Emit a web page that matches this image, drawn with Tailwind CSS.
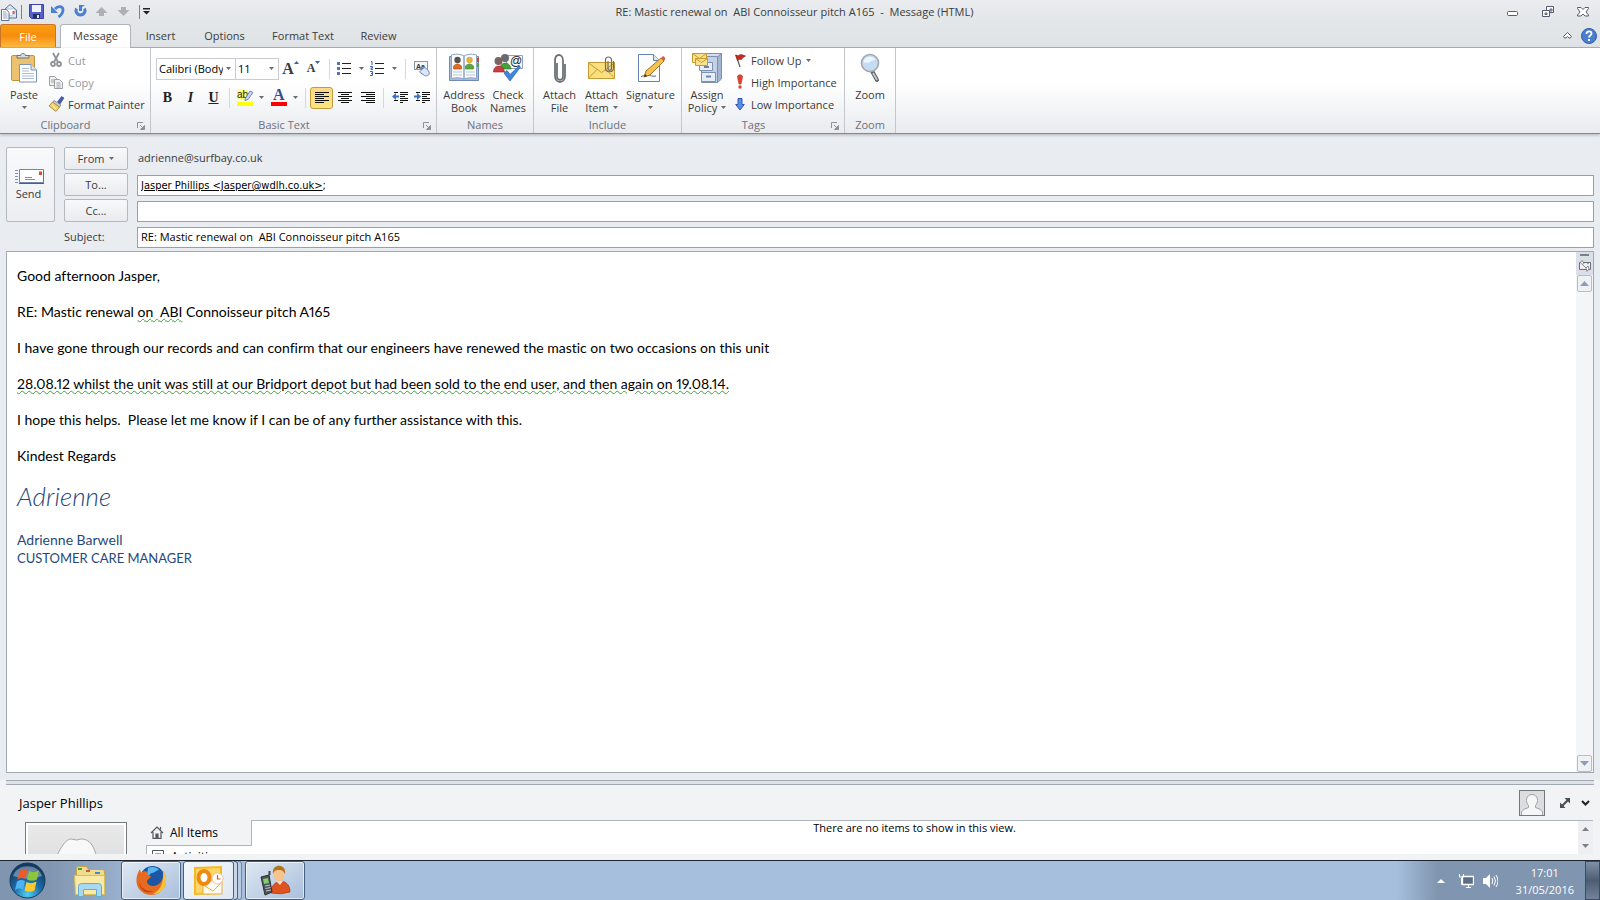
<!DOCTYPE html>
<html lang="en">
<head>
  <meta charset="UTF-8" />
  <meta name="viewport" content="width=device-width, initial-scale=1" />
  <title>RE: Mastic renewal on ABI Connoisseur pitch A165 - Message (HTML)</title>
  <script src="https://cdn.jsdelivr.net/npm/@tailwindcss/browser@4"></script>
</head>
<body class="flex h-screen flex-col overflow-hidden bg-[#e9ecf1] font-['Open_Sans','Noto_Sans',sans-serif] text-[11px] leading-[13px] text-[#3b3b3b]">

  <!-- Shared shapes -->
  <svg class="hidden">
    <symbol id="down" viewBox="0 0 5 3"><path d="M0 0h5L2.500 3z" fill="#6b6b6b"/></symbol>
    <symbol id="launcher" viewBox="0 0 8 8"><path d="M.5 6V.5H6" fill="none" stroke="#8b909a"/><path d="M3 3l3 3M7.500 3.500v4h-4z" fill="#8b909a" stroke="#8b909a"/></symbol>
  </svg>

  <!-- Title bar -->
  <header class="flex h-6 shrink-0 items-center bg-gradient-to-b from-[#eaecef] to-[#e3e6e9] pb-px">
    <div class="flex flex-1 items-center">
      <svg class="h-[18px] w-[18px]" viewBox="0 0 18 18"><path d="M4 7l6-5.500L16.500 7v8H4z" fill="#dfe9f6" stroke="#5c7394"/><path d="M6 6h9v4l-4 3-5-3z" fill="#fff" stroke="#8ea2bd" stroke-width=".6"/><path d="M12.500 8h2v3h-2z" fill="#e2593c"/><path d="M1.500 6.500h5l2.500 3v8H1.500z" fill="#fff" stroke="#5c7394"/><path d="M3 9h3M3 11h4.500M3 13h4.500M3 15h4.500" stroke="#8ea2bd"/></svg>
      <span class="mx-[3px] h-[14px] w-px bg-[#7d8187]"></span>
      <button class="ml-1 w-[22px]" aria-label="Save"><svg class="h-[15px] w-[15px]" viewBox="0 0 15 15"><path d="M.5.5h14v14h-12l-2-2z" fill="#5560cc" stroke="#3b43a3"/><path d="M3 1h9v7H3z" fill="#eef2fb"/><path d="M4 10h7v4.500H4z" fill="#26305f"/><path d="M8 11h2v3H8z" fill="#dfe4f4"/></svg></button>
      <button class="w-[22px]" aria-label="Undo"><svg class="h-[15px] w-[15px]" viewBox="0 0 15 15"><path d="M4 5c3-3.500 8-3 8 1 0 3-1.500 5-4.500 7" fill="none" stroke="#4a7fd6" stroke-width="2.800"/><path d="M0 2v7h7z" fill="#4a7fd6"/></svg></button>
      <button class="w-[22px]" aria-label="Redo"><svg class="h-[15px] w-[15px]" viewBox="0 0 15 15"><path d="M3.500 4.500a4.500 4.500 0 1 0 8 0" fill="none" stroke="#4a7fd6" stroke-width="3"/><path d="M6 1h6L9 3v4H6z" fill="#4a7fd6"/></svg></button>
      <button class="w-[22px]" aria-label="Previous item"><svg class="h-[13px] w-[13px]" viewBox="0 0 13 13"><path d="M6.500 2L12.500 8H9v3H4V8H.5z" fill="#adb0b4"/></svg></button>
      <button class="w-[22px]" aria-label="Next item"><svg class="h-[13px] w-[13px]" viewBox="0 0 13 13"><path d="M6.500 11L12.500 5H9V2H4v3H.5z" fill="#adb0b4"/></svg></button>
      <span class="h-[14px] w-px bg-[#7d8187]"></span>
      <button class="ml-[3px]" aria-label="Customise toolbar"><svg class="h-[7px] w-[8px]" viewBox="0 0 8 7"><path d="M0 0h7v1.500H0zM0 3h7L3.500 6.500z" fill="#222"/></svg></button>
    </div>
    <h1 class="text-center whitespace-pre">RE: Mastic renewal on  ABI Connoisseur pitch A165  -  Message (HTML)</h1>
    <div class="flex flex-1 items-center justify-end gap-[23px] pr-[11px]">
      <button aria-label="Minimize"><svg class="h-[12px] w-[12px]" viewBox="0 0 12 12"><rect x=".5" y="5.500" width="10" height="4" rx="1" fill="#fff" stroke="#565b73"/></svg></button>
      <button aria-label="Restore"><svg class="h-[12px] w-[12px]" viewBox="0 0 12 12"><path d="M4.500.5h7v6h-7z" fill="#fff" stroke="#565b73"/><path d="M8 3h2v2H8z" fill="none" stroke="#565b73"/><path d="M.5 4.500h7v6h-7z" fill="#fff" stroke="#565b73"/><path d="M3 7h2v1.500H3z" fill="none" stroke="#565b73"/></svg></button>
      <button aria-label="Close"><svg class="h-[12px] w-[12px]" viewBox="0 0 12 12"><path d="M.5 1.500h3.500l2 2 2-2h3.500v1L9 6l2.500 3v1H8L6 8l-2 2H.5V9L3 6 .5 2.500z" fill="#fff" stroke="#565b73"/></svg></button>
    </div>
  </header>

  <!-- Tabs -->
  <nav class="flex h-6 shrink-0 items-end border-b border-[#b0b4ba] bg-gradient-to-b from-[#e3e6e9] to-[#dfe3e6]">
    <button class="h-[23px] w-14 rounded-t-[3px] border border-b-0 border-[#c9742a] bg-gradient-to-b from-[#f9a012] via-[#f78c0c] to-[#fdbb3c] text-white">File</button>
    <button class="-mb-px ml-1 h-6 w-[71px] rounded-t-[3px] border border-b-0 border-[#b0b4ba] bg-white pb-[2px]">Message</button>
    <button class="h-[23px] w-[59px]">Insert</button>
    <button class="h-[23px] w-[69px]">Options</button>
    <button class="h-[23px] w-[88px]">Format Text</button>
    <button class="h-[23px] w-[63px]">Review</button>
    <div class="ml-auto flex h-[23px] items-center gap-[9px] pr-[3px]">
      <button aria-label="Minimize the ribbon"><svg class="h-[7px] w-[9px]" viewBox="0 0 9 7"><path d="M.5 4.500l4-4 4 4-1 1.500H6L4.500 4.500 3 6H1.500z" fill="#fff" stroke="#565b73"/></svg></button>
      <button aria-label="Help"><svg class="h-4 w-4" viewBox="0 0 16 16"><circle cx="8" cy="8" r="7.500" fill="#4a7fd0" stroke="#2f5ca8"/><path d="M5.500 6c0-3.500 5-3.500 5-.5 0 2-2.500 2-2.500 4" fill="none" stroke="#fff" stroke-width="1.800"/><path d="M7 11h2v2H7z" fill="#fff"/></svg></button>
    </div>
  </nav>

  <!-- Ribbon -->
  <section class="flex h-[86px] shrink-0 border-b border-[#85898f] bg-gradient-to-b from-white from-40% to-[#e9ebef] shadow-[0_1px_3px_rgba(0,0,0,0.25)]">

    <div class="flex w-[151px] flex-col border-r border-[#c3c7cc]">
      <div class="flex flex-1">
        <button class="flex w-12 flex-col items-center pt-[5px]">
          <svg class="h-[30px] w-[28px]" viewBox="0 0 28 30"><rect x="1.500" y="2.500" width="23" height="25" rx="1.500" fill="#ecc271" stroke="#c5933f"/><path d="M7 5V2.500h3.500C11-.2 15-.2 15.500 2.500H19V5z" fill="#d7dade" stroke="#6d7277"/><path d="M9.500 11.500H21l5.500 5.500v12H9.500z" fill="#fff" stroke="#7a93b8"/><path d="M21 11.500V17h5.500" fill="#dce6f3" stroke="#7a93b8"/><path d="M12 15.500h7M12 18h7M12 20.500h12M12 23h12M12 25.500h12" stroke="#a9bbd5"/></svg>
          <span class="mt-[5px]">Paste</span>
          <svg class="mt-[5px] h-[3px] w-[5px]"><use href="#down"/></svg>
        </button>
        <div class="flex flex-col pt-px">
          <button disabled class="flex h-[22px] items-center gap-1 text-[#96999e]"><svg class="h-4 w-4" viewBox="0 0 16 16" fill="none" stroke="#8f9297" stroke-width="1.800"><path d="M5 1l5 9M11 1l-5 9"/><circle cx="5" cy="12" r="2"/><circle cx="11" cy="12" r="2"/></svg>Cut</button>
          <button disabled class="flex h-[22px] items-center gap-1 text-[#96999e]"><svg class="h-4 w-4" viewBox="0 0 16 16" fill="#f1f1f2" stroke="#9c9fa4"><path d="M1.500 2.500h5l3 3v6h-8z"/><path d="M3 6h3M3 8h3"/><path d="M6.500 5.500h5l3 3v6h-8z"/><path d="M8.500 9h4M8.500 11h4M8.500 13h4"/></svg>Copy</button>
          <button class="flex h-[22px] items-center gap-1"><svg class="h-4 w-4" viewBox="0 0 16 16"><path d="M9.500 6l4-5.500 2.500 1.500-4 6z" fill="#4c56b5" stroke="#343d8c" stroke-width=".6"/><path d="M6 4.500l7 4.500-1.500 2-7-4z" fill="#c9ced6" stroke="#5b626d" stroke-width=".6"/><path d="M4.500 6l7 5L8 15.500 1 10z" fill="#f1d375" stroke="#a17d2a" stroke-width=".8"/><path d="M4 9l4 4" stroke="#fff6cf"/></svg><span class="whitespace-nowrap">Format Painter</span></button>
        </div>
      </div>
      <div class="flex h-[15px] pr-[5px] text-[#6b7180]"><span class="flex-1 pr-[6px] text-center">Clipboard</span><svg class="mt-1 h-2 w-2"><use href="#launcher"/></svg></div>
    </div>

    <div class="flex w-[286px] flex-col border-r border-[#c3c7cc]">
      <div class="flex flex-1 flex-col gap-[6px] pt-[9px] pl-[5px]">
        <div class="flex h-[23px] items-center">
          <span class="relative flex h-[22px] w-[80px] border border-[#c9cdd2] bg-white">
            <select aria-label="Font" class="w-[66px] appearance-none overflow-hidden pl-[2px] text-[11px] text-clip text-black"><option>Calibri (Body)</option></select>
            <svg class="absolute top-2 right-1 h-[3px] w-[5px]"><use href="#down"/></svg>
          </span>
          <span class="relative -ml-px flex h-[22px] w-11 border border-[#c9cdd2] bg-white">
            <select aria-label="Font size" class="w-full appearance-none pl-[2px] text-[11px] text-black"><option>11</option></select>
            <svg class="absolute top-2 right-1 h-[3px] w-[5px]"><use href="#down"/></svg>
          </span>
          <button aria-label="Grow font" class="flex w-[23px] items-center justify-center font-['Liberation_Serif',serif] text-[16px] font-bold">A<svg class="mb-3 h-[3px] w-[5px]" viewBox="0 0 5 3"><path d="M0 3h5L2.500 0z" fill="#3b5fb0"/></svg></button>
          <button aria-label="Shrink font" class="flex w-[23px] items-center justify-center font-['Liberation_Serif',serif] text-[12px] font-bold">A<svg class="mb-3 h-[3px] w-[5px]" viewBox="0 0 5 3"><path d="M0 0h5L2.500 3z" fill="#3b5fb0"/></svg></button>
          <span class="mr-1 ml-[4px] h-5 w-px bg-[#d4d7db]"></span>
          <button aria-label="Bullets" class="flex w-[33px] items-center justify-center gap-[7px]"><svg class="h-[15px] w-[15px]" viewBox="0 0 15 15"><path d="M5 2.500h9M5 7.500h9M5 12.500h9" stroke="#222"/><path d="M0 1h3v3H0zM0 6h3v3H0zM0 11h3v3H0z" fill="#5674b8"/></svg><svg class="h-[3px] w-[5px]"><use href="#down"/></svg></button>
          <button aria-label="Numbering" class="flex w-[33px] items-center justify-center gap-[7px]"><svg class="h-[15px] w-[15px]" viewBox="0 0 15 15"><path d="M5 2.500h9M5 7.500h9M5 12.500h9" stroke="#222"/><path d="M1 .5h1V4M0 5.500h2.500v1.500H1v1.500h2M0 10.500h2.500v4H0M1 12.500h1.500" fill="none" stroke="#3b5fb0"/></svg><svg class="h-[3px] w-[5px]"><use href="#down"/></svg></button>
          <span class="mx-[5px] h-5 w-px bg-[#d4d7db]"></span>
          <button aria-label="Clear formatting" class="flex w-[22px] justify-center"><svg class="h-[17px] w-[17px]" viewBox="0 0 17 17"><rect x=".5" y="1.500" width="13" height="8" fill="#f2f5fa" stroke="#8795ad"/><text x="2" y="8.500" font-size="7" font-family="Liberation Sans" font-weight="bold" fill="#333">Aa</text><path d="M5.500 12l4-4c1-1 3 0 5 3 1 1.500 1 3 0 4-1 1-3 1-4 .5z" fill="#dde6f5" stroke="#6f86b3"/></svg></button>
        </div>
        <div class="flex h-[23px] items-center font-['Liberation_Serif',serif] text-[14px] text-[#222]">
          <button aria-label="Bold" class="h-[23px] w-[23px] font-bold">B</button>
          <button aria-label="Italic" class="h-[23px] w-[23px] font-bold italic">I</button>
          <button aria-label="Underline" class="h-[23px] w-[23px] font-bold underline">U</button>
          <span class="mx-1 h-5 w-px bg-[#d4d7db]"></span>
          <button aria-label="Highlight" class="flex w-[33px] items-center justify-center gap-[5px]"><svg class="h-[17px] w-[17px]" viewBox="0 0 17 17"><path d="M0 1h11v9H0z" fill="#ffff70"/><text x="0" y="8.500" font-size="10" font-family="Liberation Sans" fill="#222">ab</text><path d="M8 10l5-8 3 1.500-5 7-3 1z" fill="#c8d6ee" stroke="#5673a8" stroke-width=".8"/><path d="M0 13h16v4H0z" fill="#ff0"/></svg><svg class="h-[3px] w-[5px]"><use href="#down"/></svg></button>
          <button aria-label="Font colour" class="flex w-[34px] items-center justify-center gap-[5px]"><svg class="h-[17px] w-[17px]" viewBox="0 0 17 17"><text x="2" y="11" font-size="16" font-family="Liberation Serif" font-weight="bold" fill="#34508c">A</text><path d="M0 13h16v4H0z" fill="#f00"/></svg><svg class="h-[3px] w-[5px]"><use href="#down"/></svg></button>
          <span class="mx-1 h-5 w-px bg-[#d4d7db]"></span>
          <button aria-label="Align left" class="flex h-[22px] w-[23px] items-center justify-center rounded-[3px] border border-[#c29b3f] bg-gradient-to-b from-[#fbd98a] to-[#fde57c]"><svg class="h-[13px] w-[14px]" viewBox="0 0 14 13" stroke="#111"><path d="M0 1.500h14M0 3.500h9M0 5.500h14M0 7.500h9M0 9.500h14M0 11.500h9"/></svg></button>
          <button aria-label="Centre" class="flex w-[23px] justify-center"><svg class="h-[13px] w-[14px]" viewBox="0 0 14 13" stroke="#111"><path d="M0 1.500h14M3 3.500h8M0 5.500h14M3 7.500h8M0 9.500h14M3 11.500h8"/></svg></button>
          <button aria-label="Align right" class="flex w-[23px] justify-center"><svg class="h-[13px] w-[14px]" viewBox="0 0 14 13" stroke="#111"><path d="M0 1.500h14M5 3.500h9M0 5.500h14M5 7.500h9M0 9.500h14M5 11.500h9"/></svg></button>
          <span class="mx-1 h-5 w-px bg-[#d4d7db]"></span>
          <button aria-label="Decrease indent" class="flex w-[23px] justify-center"><svg class="h-[13px] w-[16px]" viewBox="0 0 16 13"><path d="M2 1.500h4M8 1.500h8M8 3.500h8M8 5.500h5M8 7.500h8M2 9.500h4M8 9.500h8M8 11.500h3" stroke="#111"/><path d="M0 5.500L4 2v2.500h3v2H4V9z" fill="#3f6fc9"/></svg></button>
          <button aria-label="Increase indent" class="flex w-[22px] justify-center"><svg class="h-[13px] w-[16px]" viewBox="0 0 16 13"><path d="M2 1.500h4M8 1.500h8M8 3.500h8M8 5.500h5M8 7.500h8M2 9.500h4M8 9.500h8M8 11.500h3" stroke="#111"/><path d="M7 5.500L3 2v2.500H0v2h3V9z" fill="#3f6fc9"/></svg></button>
        </div>
      </div>
      <div class="flex h-[15px] pr-[5px] text-[#6b7180]"><span class="flex-1 pr-[6px] text-center">Basic Text</span><svg class="mt-1 h-2 w-2"><use href="#launcher"/></svg></div>
    </div>

    <div class="flex w-[97px] flex-col border-r border-[#c3c7cc]">
      <div class="flex flex-1 justify-center">
        <button class="flex w-[46px] flex-col items-center pt-[5px]">
          <svg class="h-[30px] w-[30px]" viewBox="0 0 30 30"><path d="M.5 3.500h29v24H.5z" fill="#a9bddb" stroke="#6f8ab5"/><path d="M2.500 2c5-1.500 9-1 12.500 1v23c-4-1.500-8-1.500-12.500-.5zM27.500 2c-5-1.500-9-1-12.500 1v23c4-1.500 8-1.500 12.500-.5z" fill="#fbfcfe" stroke="#8ba2c6"/><path d="M4 19h9M4 22h9M17 19h9M17 22h9" stroke="#b9c7de"/><circle cx="8.500" cy="7" r="3.200" fill="#5c5148"/><path d="M4.500 16v-3q4-4 8 0v3z" fill="#e06c26" stroke="#a94713" stroke-width=".6"/><circle cx="20.500" cy="7" r="3.200" fill="#e0b23f"/><path d="M16.500 16v-3q4-4 8 0v3z" fill="#59a83f" stroke="#357820" stroke-width=".6"/><path d="M28 5h2v4h-2z" fill="#d8432f"/><path d="M28 10h2v4h-2z" fill="#59a83f"/></svg>
          <span class="mt-[5px]">Address<br>Book</span>
        </button>
        <button class="flex w-[42px] flex-col items-center pt-[5px]">
          <svg class="h-[30px] w-[30px]" viewBox="0 0 30 30"><path d="M13.500 2.500h16v13h-16z" fill="#f4f7fb" stroke="#8ba2c6"/><circle cx="12" cy="5" r="4" fill="#6b6b6b"/><path d="M7 16c0-8 10-8 11 0z" fill="#46a13a" stroke="#2c7723" stroke-width=".6"/><circle cx="5.500" cy="8" r="4" fill="#7c6464"/><path d="M.5 19c0-8 10-8 11 0z" fill="#c93f45" stroke="#952020" stroke-width=".6"/><text x="17" y="12" font-size="12" font-family="Liberation Sans" fill="#222">@</text><path d="M11 20l3-2.500 3 4L26 13l1.500 1L17 28z" fill="#3f86dd" stroke="#235fae" stroke-width=".7"/></svg>
          <span class="mt-[5px]">Check<br>Names</span>
        </button>
      </div>
      <div class="h-[15px] text-center text-[#6b7180]">Names</div>
    </div>

    <div class="flex w-[148px] flex-col border-r border-[#c3c7cc]">
      <div class="flex flex-1 justify-center pl-[2px]">
        <button class="flex w-[42px] flex-col items-center pt-[5px]">
          <svg class="h-[30px] w-[30px]" viewBox="0 0 30 30" fill="none"><path d="M12 10v13c0 5 6 5 6 0V8c0-8-8-8-8 0v15c0 8 10 8 10 0V11" stroke="#6d7277" stroke-width="1.800"/></svg>
          <span class="mt-[5px]">Attach<br>File</span>
        </button>
        <button class="flex w-[42px] flex-col items-center pt-[5px]">
          <svg class="h-[30px] w-[30px]" viewBox="0 0 30 30"><path d="M1.500 9.500h26v16h-26z" fill="#fadf7d" stroke="#c59a35"/><path d="M1.500 25l9-9M27.500 25l-9-9M1.500 10l13 9.500L27.500 10" fill="none" stroke="#c59a35"/><path d="M21 8v7c0 3 3.500 3 3.500 0V7c0-4-6-4-6 0v8c0 5 8 5 8 0V8" fill="none" stroke="#686d73" stroke-width="1.200"/></svg>
          <span class="mt-[5px]">Attach<br><span class="flex items-center justify-center gap-1">Item<svg class="h-[3px] w-[5px]"><use href="#down"/></svg></span></span>
        </button>
        <button class="flex w-[56px] flex-col items-center pt-[5px]">
          <svg class="h-[30px] w-[30px]" viewBox="0 0 30 30"><path d="M2.500 1.500h15l6 6v21h-21z" fill="#fbfcfe" stroke="#6984b1"/><path d="M17.500 1.500v6h6" fill="#dce6f3" stroke="#6984b1"/><path d="M5 24c3-3 4 1 6-1s4 1 9 0" fill="none" stroke="#4867a0"/><path d="M8 24l2-6L25 5l3 3-14 14z" fill="#f3c253" stroke="#a3761e"/><path d="M25 5l1.500-1.500c1-1 3.500 1.500 2.500 3L28 8z" fill="#d9594b"/><path d="M8 24l1-3 2 2z" fill="#333"/></svg>
          <span class="mt-[5px]">Signature</span>
          <svg class="mt-[5px] h-[3px] w-[5px]"><use href="#down"/></svg>
        </button>
      </div>
      <div class="h-[15px] text-center text-[#6b7180]">Include</div>
    </div>

    <div class="flex w-[163px] flex-col border-r border-[#c3c7cc]">
      <div class="flex flex-1">
        <button class="flex w-[50px] flex-col items-center pt-[5px]">
          <svg class="h-[30px] w-[30px]" viewBox="0 0 30 30"><path d="M11 .5h18l-3 4H9z" fill="#d6deea" stroke="#7c90b0"/><path d="M9.500 3.500h16v26h-16z" fill="#c4d1e4" stroke="#7c90b0"/><path d="M25.500 4l4-3.500V26l-4 3.500z" fill="#a3b5d0" stroke="#7c90b0"/><path d="M7.500 9.500h13v8h-13zM9.500 19.500h14v9h-14z" fill="#e7edf6" stroke="#7c90b0"/><path d="M12 13h5v2h-5zM14 22.500h5v2h-5z" fill="#6d82a6"/><path d="M.5.5h14v9H.5z" fill="#fbe188" stroke="#c59a35"/><path d="M.5.5l7 5 7-5" fill="none" stroke="#c59a35"/><path d="M3.500 5.500h12v7h-12z" fill="#fbe188" stroke="#c59a35"/><path d="M3.500 5.500l6 4 6-4" fill="none" stroke="#c59a35"/></svg>
          <span class="mt-[5px]">Assign<br><span class="flex items-center justify-center gap-1">Policy<svg class="h-[3px] w-[5px]"><use href="#down"/></svg></span></span>
        </button>
        <div class="flex flex-col pt-px">
          <button class="flex h-[22px] items-center gap-[3px]"><svg class="h-4 w-4" viewBox="0 0 16 16"><path d="M4 3l4 12" stroke="#555" stroke-width="1.200"/><path d="M3.500 3q3 1.500 4 0t6 1q-3 1-4 3.500-1.500-1-4 1z" fill="#c92a1e" stroke="#8c1b12" stroke-width=".6"/></svg>Follow Up<svg class="ml-px h-[3px] w-[5px]"><use href="#down"/></svg></button>
          <button class="flex h-[22px] items-center gap-[3px] whitespace-nowrap"><svg class="h-4 w-4" viewBox="0 0 16 16"><path d="M5.500 3c0-3 5-3 5 0L9 10H7z" fill="#e0442d" stroke="#b52a17" stroke-width=".6"/><circle cx="8" cy="13" r="1.700" fill="#d8492f"/></svg>High Importance</button>
          <button class="flex h-[22px] items-center gap-[3px] whitespace-nowrap"><svg class="h-4 w-4" viewBox="0 0 16 16"><path d="M6 2.500h4v6h2.300L8 14 3.700 8.500H6z" fill="#5a8ceb" stroke="#2f58b3"/></svg>Low Importance</button>
        </div>
      </div>
      <div class="flex h-[15px] pr-[5px] text-[#6b7180]"><span class="flex-1 pr-[6px] text-center">Tags</span><svg class="mt-1 h-2 w-2"><use href="#launcher"/></svg></div>
    </div>

    <div class="flex w-[51px] flex-col border-r border-[#c3c7cc]">
      <button class="flex flex-1 flex-col items-center pt-[5px]">
        <svg class="h-[30px] w-[30px]" viewBox="0 0 30 30"><path d="M17 18l5 9" stroke="#5f6368" stroke-width="4" stroke-linecap="round"/><path d="M18 20l4 7" stroke="#c4c8cd" stroke-width="1.800"/><circle cx="15" cy="10" r="8.500" fill="#c4dcf4" stroke="#a3a8b0" stroke-width="1.600"/><path d="M8.500 9c1-6 10-7 12-2-4-1-6 5-12 2z" fill="#eef6fe"/></svg>
        <span class="mt-[5px]">Zoom</span>
      </button>
      <div class="h-[15px] text-center text-[#6b7180]">Zoom</div>
    </div>
  </section>

  <!-- Address fields -->
  <form class="mt-[13px] flex shrink-0 gap-[9px] px-1.5">
    <button type="button" class="flex h-[75px] w-[49px] flex-col items-center justify-center gap-[3px] rounded-[2px] border border-[#b5b9bf] bg-gradient-to-b from-[#f8f9fb] to-[#eceef1] pr-1">
      <svg class="h-[15px] w-[30px]" viewBox="0 0 30 15"><path d="M1 1.500h3M1 4.500h3M1 7.500h3M1 10.500h3M1 13.500h3" stroke="#7e8fb5"/><path d="M5.500.5h24v13h-24z" fill="#fff" stroke="#7388ab"/><path d="M5 14.500h25V1" fill="none" stroke="#4c5f7d"/><path d="M25 2.500h3V6h-3z" fill="#dd4b2f"/><path d="M11 8.500h7M11 10.500h10" stroke="#6f8fd0"/></svg>
      Send
    </button>
    <div class="flex flex-1 flex-col gap-[3px]">
      <div class="flex h-[23px] items-center gap-[9px]">
        <button type="button" class="flex h-[23px] w-16 items-center justify-center gap-[5px] rounded-[2px] border border-[#b5b9bf] bg-gradient-to-b from-[#f8f9fb] to-[#e9ebee]">From<svg class="h-[3px] w-[5px]"><use href="#down"/></svg></button>
        <span class="pb-[2px] pl-px">adrienne@surfbay.co.uk</span>
      </div>
      <div class="flex h-[23px] items-end gap-[9px]">
        <button type="button" id="to" class="h-[23px] w-16 rounded-[2px] border border-[#b5b9bf] bg-gradient-to-b from-[#f8f9fb] to-[#e9ebee] pb-px">To...</button>
        <div class="flex h-[21px] flex-1 items-center border border-[#9c9fa5] bg-white pl-[3px] font-['DejaVu_Sans_Condensed','DejaVu_Sans',sans-serif] text-black">
          <input aria-labelledby="to" value="Jasper Phillips &lt;Jasper@wdlh.co.uk&gt;" class="field-sizing-content underline outline-none" />;
        </div>
      </div>
      <div class="flex h-[23px] items-end gap-[9px]">
        <button type="button" id="cc" class="h-[23px] w-16 rounded-[2px] border border-[#b5b9bf] bg-gradient-to-b from-[#f8f9fb] to-[#e9ebee] pb-px">Cc...</button>
        <input aria-labelledby="cc" class="h-[21px] flex-1 border border-[#9c9fa5] bg-white px-[3px] text-black outline-none" />
      </div>
      <div class="flex h-[23px] items-end gap-[9px]">
        <label for="subject" class="w-16 pb-[5px]">Subject:</label>
        <input id="subject" value="RE: Mastic renewal on  ABI Connoisseur pitch A165" class="h-[21px] flex-1 border border-[#9c9fa5] bg-white px-[3px] pb-[2px] text-black outline-none" />
      </div>
    </div>
  </form>

  <!-- Message body -->
  <main class="mx-1.5 mt-[3px] flex min-h-0 flex-1 border border-[#a2a9b3] bg-white">
    <div contenteditable="true" role="textbox" aria-label="Message" spellcheck="false" class="flex-1 space-y-[18px] overflow-hidden pt-[15px] pl-[10px] font-[Lato,sans-serif] text-[14px] leading-[18px] whitespace-pre-wrap text-black proportional-nums outline-none [font-variant-ligatures:none]"><p>Good afternoon Jasper,</p><p>RE: Mastic renewal <span class="underline decoration-[#3aa53a] decoration-wavy decoration-1">on  ABI</span> Connoisseur pitch A165</p><p>I have gone through our records and can confirm that our engineers have renewed the mastic on two occasions on this unit</p><p><span class="underline decoration-[#3aa53a] decoration-wavy decoration-1">28.08.12 whilst the unit was still at our Bridport depot but had been sold to the end user, and then again on 19.08.14.</span></p><p>I hope this helps.  Please let me know if I can be of any further assistance with this.</p><p>Kindest Regards</p><p class="text-[26px] leading-[26px] font-light text-[#1f497d] italic">Adrienne</p><p class="pt-1 text-[#1f497d]">Adrienne Barwell<br><span class="text-[13px]">CUSTOMER CARE MANAGER</span></p></div>
    <div class="flex w-[17px] flex-col items-center bg-[#f4f5f6]">
      <div class="flex h-[23px] w-full flex-col items-center bg-[#dbe0e8] pt-[2px]">
        <span class="h-[2px] w-[9px] bg-[#7b8088]"></span>
        <svg class="mt-1 h-3 w-3" viewBox="0 0 12 12"><path d="M.5 2.500h11v7H.5z" fill="#f5eef0" stroke="#6b6f78"/><path d="M3 .5l2 3-2 1-1.500-2zM7 8l2-2 1 3-2 2.500zM4 5l3 3M8 4l2-1" fill="#fff" stroke="#6b6f78" stroke-width=".8"/></svg>
      </div>
      <button aria-label="Scroll up" class="flex h-[17px] w-[15px] items-center justify-center rounded-[2px] border border-[#b9bdc4] bg-[#f0f1f3]"><svg class="h-[5px] w-[9px]" viewBox="0 0 9 5"><path d="M0 5h9L4.500 0z" fill="#8e9cc4"/></svg></button>
      <button aria-label="Scroll down" class="mt-auto flex h-[17px] w-[15px] items-center justify-center rounded-[2px] border border-[#b9bdc4] bg-[#f0f1f3]"><svg class="h-[5px] w-[9px]" viewBox="0 0 9 5"><path d="M0 0h9L4.500 5z" fill="#8e9cc4"/></svg></button>
    </div>
  </main>

  <!-- People pane -->
  <section class="mt-[7px] flex h-20 shrink-0 flex-col bg-[#f2f3f5] pb-[6px] text-black">
    <div class="mx-1.5 h-[5px] border-y border-[#a2a9b3] bg-[#dfe3e9]"></div>
    <div class="flex h-[35px] items-center pr-[10px] pl-[19px]">
      <h2 class="flex-1 pt-px text-[13px]">Jasper Phillips</h2>
      <svg class="h-[26px] w-[26px]" viewBox="0 0 26 26"><rect x=".5" y=".5" width="25" height="25" fill="#dcdddf" stroke="#75787c"/><path d="M2.500 25v-3q1-3 7-4.500v-2C6 12 7 4.500 13 4.500s7 7.500 3.500 11v2q6 1.500 7 4.500v3" fill="#f6f6f7" stroke="#9fa2a6"/></svg>
      <button aria-label="Expand" class="ml-[15px]"><svg class="h-[10px] w-[10px]" viewBox="0 0 10 10"><path d="M4.500 0H10v5.500L8 3.500 3.500 8l2 2H0V4.500l2 2L6.500 2z" fill="#4a4e54"/></svg></button>
      <button aria-label="Collapse" class="ml-[11px]"><svg class="h-[6px] w-[9px]" viewBox="0 0 9 6"><path d="M1 1l3.500 3.500L8 1" fill="none" stroke="#222" stroke-width="2"/></svg></button>
    </div>
    <div class="flex min-h-0 flex-1 overflow-hidden pr-[7px] pl-[25px]">
      <div class="mt-[2px] h-[102px] w-[102px] border border-[#75787c] bg-white p-[2px]">
        <svg class="h-24 w-24 bg-gradient-to-b from-[#e9e9ea] to-[#d0d1d3]" viewBox="0 0 96 96"><path d="M22 50C28 30 36 14 43 14q6 2 10 0c14 0 14 16 22 36z" fill="#f8f8f8" stroke="#a5a7aa"/></svg>
      </div>
      <ul class="ml-[19px] w-[105px] text-[12px]">
        <li class="flex h-[25px] items-center gap-[6px] pl-1"><svg class="h-[13px] w-[14px]" viewBox="0 0 14 13" fill="none" stroke="#55585d" stroke-width="1.200"><path d="M1 7l6-6 6 6M3 6v6.400h8V6M10.500 3.500V1"/><path d="M6 8h2v4H6z" fill="#55585d"/></svg>All Items</li>
        <li class="flex h-[22px] items-center gap-[6px] border-t border-l border-[#aeb4bd] bg-white pl-1"><svg class="h-[13px] w-[14px]" viewBox="0 0 14 13" fill="none" stroke="#55585d"><path d="M1.500.5h11v12h-11zM4 4h6M4 7h6"/></svg>Activities</li>
      </ul>
      <div class="flex flex-1 border-t border-[#aeb4bd] bg-white">
        <div class="flex-1"><div class="h-[25px] w-px bg-[#aeb4bd]"></div></div>
        <p>There are no items to show in this view.</p>
        <div class="flex-1"></div>
        <div class="flex w-[15px] flex-col items-center justify-around bg-[#efeff1]">
          <svg class="h-1 w-[7px]" viewBox="0 0 7 4"><path d="M0 4h7L3.500 0z" fill="#7c8087"/></svg>
          <svg class="h-1 w-[7px]" viewBox="0 0 7 4"><path d="M0 0h7L3.500 4z" fill="#7c8087"/></svg>
        </div>
      </div>
    </div>
  </section>

  <!-- Taskbar -->
  <footer class="flex h-10 shrink-0 items-stretch border-t border-[#1d2530] bg-gradient-to-r from-[#8095af] from-3% via-[#a5bfdd] via-10% to-[#a5bfdd]">
    <button aria-label="Start" class="flex w-[54px] items-center justify-center">
      <svg class="h-[37px] w-[37px]" viewBox="0 0 37 37"><defs><radialGradient id="orb" cx=".5" cy=".9" r=".8"><stop offset="0" stop-color="#4fd0f5"/><stop offset=".5" stop-color="#1c6aa6"/><stop offset="1" stop-color="#123a63"/></radialGradient></defs><circle cx="18.500" cy="18.500" r="17.500" fill="url(#orb)" stroke="#1c3957"/><path d="M4 14C8 1 29 1 33 14q-14 5-29 0z" fill="#fff" opacity=".35"/><path d="M10.500 9q4-2.500 8-.5l-2 8.500q-4-2-8 .5z" fill="#ee5a2a"/><path d="M20 9q4 2.500 10-.5l-2 9q-5 2.500-10 0z" fill="#8cc63f"/><path d="M8 19.500q4-2.500 8-.5l-2 8.500q-4-2-8 .5z" fill="#4db3f5"/><path d="M17.500 20q4 2.500 10-.5l-2 9q-5 2.500-10 0z" fill="#fcc92f"/></svg>
    </button>
    <button aria-label="Windows Explorer" class="flex w-[67px] items-center justify-center pl-1">
      <svg class="h-[32px] w-[34px]" viewBox="0 0 34 32"><path d="M3.500 3.500q0-2 2-2h8l2 3h14q2 0 2 2v20h-28z" fill="#f0dc8c" stroke="#c4a548"/><path d="M5 3h4v2H5z" fill="#3aa53a"/><path d="M13 5h4v2h-4z" fill="#d5523b"/><path d="M22 7h5v2h-5z" fill="#3f86dd"/><path d="M1.500 10.500h30v19h-29z" fill="#f9eaa5" stroke="#d8bd62"/><path d="M5.500 31.500v-10q0-3 3-3h17q3 0 3 3v10h-5v-7h-13v7z" fill="#a8d8f2" stroke="#62aed8"/></svg>
    </button>
    <button aria-label="Firefox" class="mr-[2px] flex w-[60px] items-center justify-center rounded-[3px] border border-[#48607f] bg-gradient-to-br from-[#dfe8f3] to-[#a9bfdb] shadow-[inset_0_0_0_1px_rgba(255,255,255,0.6)]">
      <svg class="h-[31px] w-[31px]" viewBox="0 0 31 31"><circle cx="16.500" cy="13.500" r="12.500" fill="#1b57a5"/><path d="M12 3c4-2 9-1 11 2-3 0-4 3-7 3s-1 4-5 2z" fill="#57b7ee"/><path d="M27 6c4 5 4 12 1 17-6 9-19 9-25 1C-1 18 0 10 4 4l1 4c2-2 5-2 7-1-2 2 0 4 3 4-1 3-4 3-4 6 1 4 6 5 10 3 5-2 7-8 6-14z" fill="#e66a1f"/><path d="M27 6c4 5 4 12 1 17-3 4-6 6-11 6 8-4 11-12 10-23z" fill="#fbc53a"/><path d="M3 16c1 7 7 11 14 10-7 4-14-2-14-10z" fill="#c53a12"/></svg>
    </button>
    <button aria-label="Outlook" class="flex w-[51px] items-center justify-center rounded-[3px] border border-[#48607f] bg-gradient-to-br from-[#f4f7fb] to-[#dfe8f3]">
      <svg class="h-[31px] w-[31px]" viewBox="0 0 31 31"><path d="M1 2l28-1v28L1 30z" fill="#f6b921"/><path d="M3 4l24-1v24L3 28z" fill="#fdd667"/><path d="M10 20l14-7 5 3v13H10z" fill="#fffaf0" stroke="#eab03a"/><path d="M10 20l10 6 9-9" fill="none" stroke="#eab03a"/><ellipse cx="11" cy="12.500" rx="5.500" ry="6.500" fill="#fff" stroke="#ee8a12" stroke-width="4"/><circle cx="24.500" cy="13.500" r="5.500" fill="#fff" stroke="#eec29a"/><path d="M24.500 10v4h3" fill="none" stroke="#d55b22" stroke-width="1.200"/></svg>
    </button>
    <span class="w-1 rounded-r-[3px] border-y border-r border-[#48607f] bg-[#c8d6e8]"></span>
    <span class="mr-[3px] w-1 rounded-r-[3px] border-y border-r border-[#6f88a8] bg-[#b9cce3]"></span>
    <button aria-label="Phone contacts" class="flex w-[60px] items-center justify-center rounded-[3px] border border-[#48607f] bg-gradient-to-br from-[#dfe8f3] to-[#a9bfdb] shadow-[inset_0_0_0_1px_rgba(255,255,255,0.6)]">
      <svg class="h-[31px] w-[31px]" viewBox="0 0 31 31"><path d="M11 28c0-15 19-16 19-1q-9 3-19 1z" fill="#e0531f" stroke="#a22f10" stroke-width=".7"/><path d="M16 16l4 4 3-4z" fill="#f6e3c8"/><ellipse cx="19" cy="9" rx="5.500" ry="7.500" fill="#f6c48d"/><path d="M13 9c-2-11 14-11 12 0-2-4-4-4-6-4s-5 0-6 4z" fill="#b0761e"/><path d="M1 12l8-2 3 17-7 3z" fill="#4d5358" stroke="#2b3035"/><path d="M3 14l5-1 1 5-5 1z" fill="#7fd06a"/><path d="M9.500 10V6" stroke="#3d4348" stroke-width="2"/><path d="M5 21l5-1M5.500 23.500l5-1M6 26l5-1" stroke="#c0c5ca"/></svg>
    </button>
    <div class="ml-auto flex items-center bg-gradient-to-r from-transparent to-[#8095af] to-20% pl-10 leading-[17px] text-white">
      <button aria-label="Show hidden icons"><svg class="h-1 w-2" viewBox="0 0 8 4"><path d="M0 4h8L4 0z" fill="#fff"/></svg></button>
      <svg class="ml-[13px] h-4 w-4" viewBox="0 0 16 16" fill="none" stroke="#fff"><path d="M4.500 3.500h11v8H4.500z" stroke-width="1.300" fill="#5b6e88"/><path d="M8 14.500h5M10.500 12v2M1.500 1v3h4V1M3.500 4.500v7H6"/></svg>
      <svg class="ml-2 h-4 w-4" viewBox="0 0 16 16"><path d="M1 5h3l4-4v14l-4-4H1z" fill="#fff"/><path d="M10 5q1.500 3 0 6M12 3.500q3 4.500 0 9M14 2q4 6 0 12" fill="none" stroke="#fff"/></svg>
      <time class="ml-[18px] text-center">17:01<br>31/05/2016</time>
      <button aria-label="Show desktop" class="ml-[11px] h-full w-[15px] border border-[#3c4b5f] bg-gradient-to-b from-[#7f8fa5] via-[#4d5d73] to-[#71829a]"></button>
    </div>
  </footer>

</body>
</html>
